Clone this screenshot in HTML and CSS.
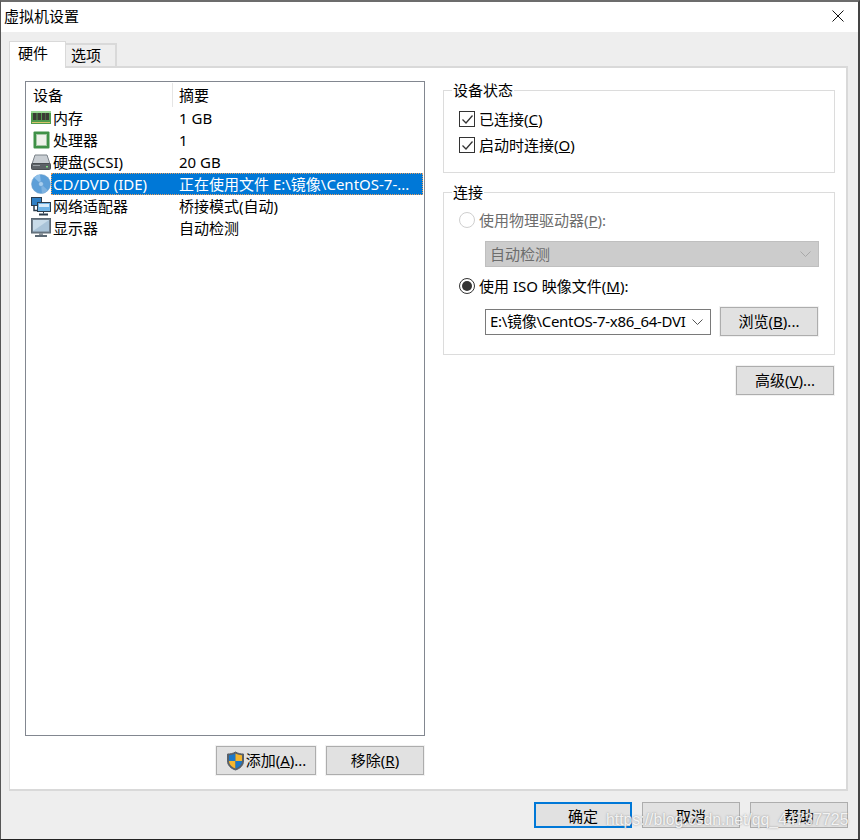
FILE: index.html
```html
<!DOCTYPE html>
<html lang="zh-CN">
<head>
  <meta charset="UTF-8">
  <title>虚拟机设置</title>
  <link rel="stylesheet" href="styles.css">
</head>
<body>
  <div class="window">
    <div class="title-bar">
      <span class="title">虚拟机设置</span>
      <svg class="close" width="12" height="12" viewBox="0 0 12 12"><path d="M0.5 0.5L11.5 11.5M11.5 0.5L0.5 11.5" stroke="#111" stroke-width="1" fill="none"/></svg>
    </div>

    <div class="client">
      <div class="tabs">
        <div class="tab active">硬件</div>
        <div class="tab">选项</div>
      </div>

      <div class="panel">
        <div class="left">
          <div class="list">
            <div class="list-head">
              <span class="head-name">设备</span>
              <span class="head-summary">摘要</span>
            </div>

            <div class="row">
              <svg class="icon" width="20" height="20" viewBox="0 0 20 20"><rect x="0" y="3" width="20" height="13" fill="#4f9a4c"/><rect x="0" y="3" width="20" height="2" fill="#9ad695"/><rect x="2" y="5" width="3.500" height="7" fill="#3b3b35"/><rect x="6.500" y="5" width="3.500" height="7" fill="#3b3b35"/><rect x="11" y="5" width="3.500" height="7" fill="#3b3b35"/><rect x="15" y="5" width="3" height="7" fill="#3b3b35"/><rect x="1" y="14" width="18" height="1" fill="#d7c46a"/></svg>
              <div class="row-body"><span class="name">内存</span><span class="summary">1 GB</span></div>
            </div>
            <div class="row">
              <svg class="icon" width="20" height="20" viewBox="0 0 20 20"><rect x="2.500" y="1.500" width="16" height="17" rx="1" fill="#3f9147"/><rect x="5.500" y="4.500" width="10" height="11" fill="#eef2ea" stroke="#a5c8a5" stroke-width="1"/></svg>
              <div class="row-body"><span class="name">处理器</span><span class="summary">1</span></div>
            </div>
            <div class="row">
              <svg class="icon" width="20" height="20" viewBox="0 0 20 20"><path d="M4 3h12l3 9H1z" fill="#c9ced3" stroke="#7b8289"/><rect x="0.500" y="11.500" width="19" height="6" rx="1" fill="#5d6267" stroke="#4a4e52"/><rect x="2" y="13" width="7" height="1" fill="#9aa0a5"/><rect x="15" y="14" width="2" height="1.500" fill="#7fe07f"/></svg>
              <div class="row-body"><span class="name">硬盘(SCSI)</span><span class="summary">20 GB</span></div>
            </div>
            <div class="row selected">
              <svg class="icon" width="20" height="20" viewBox="0 0 20 20"><circle cx="10" cy="10" r="9.500" fill="#5d9fd8" stroke="#6d9fc9" stroke-width="0.500"/><path d="M10 10L3 3.500A9.500 9.500 0 0 1 9 0.500z" fill="#8fc0ea"/><path d="M10 10L17 16.500A9.500 9.500 0 0 1 11 19.500z" fill="#80b3e0"/><circle cx="10" cy="10" r="2.500" fill="#a9cfef" stroke="#4f8cc4" stroke-width="0.500"/></svg>
              <div class="row-body"><span class="name">CD/DVD (IDE)</span><span class="summary">正在使用文件 E:\镜像\CentOS-7-...</span></div>
            </div>
            <div class="row">
              <svg class="icon" width="20" height="20" viewBox="0 0 20 20"><rect x="0.500" y="1.500" width="10" height="8" fill="#2f7fc4" stroke="#2b3c4c"/><path d="M3 9.500v5h4" stroke="#2b3c4c" fill="none" stroke-width="1.500"/><rect x="6.500" y="6.500" width="13" height="9" fill="#6fb4e6" stroke="#2b3c4c"/><rect x="8" y="8" width="10" height="3" fill="#d8ecfa"/><path d="M8 18.500h9" stroke="#2b3c4c" stroke-width="2"/><path d="M12.500 15.500v2" stroke="#2b3c4c"/></svg>
              <div class="row-body"><span class="name">网络适配器</span><span class="summary">桥接模式(自动)</span></div>
            </div>
            <div class="row">
              <svg class="icon" width="20" height="20" viewBox="0 0 20 20"><rect x="0.500" y="0.500" width="19" height="14.500" fill="#6f7d8a" stroke="#5b6873"/><rect x="2" y="2" width="16" height="11.500" fill="#a9c3d8"/><path d="M2 2h16L2 13z" fill="#c8dbe9"/><rect x="8" y="15" width="4" height="2" fill="#8a949c"/><rect x="4" y="17" width="12" height="2" fill="#5b6873"/></svg>
              <div class="row-body"><span class="name">显示器</span><span class="summary">自动检测</span></div>
            </div>
          </div>

          <div class="list-buttons">
            <button class="btn btn-add">
              <svg width="19" height="20" viewBox="0 0 19 20"><path d="M9.500 1C7 2.500 4.500 3 1.500 3v7c0 4.500 3.500 7.500 8 9 4.500-1.500 8-4.500 8-9V3c-3 0-5.500-.5-8-2z" fill="#596068" stroke="#596068" stroke-width="1"/><path d="M9.500 2.500C7.500 3.500 5 4 3 4.200V10h6.500z" fill="#1c78c8"/><path d="M9.500 2.500C11.500 3.500 14 4 16 4.200V10H9.500z" fill="#f5b62c"/><path d="M3 10h6.500v7.500C6 16.200 3 14 3 10z" fill="#f5b62c"/><path d="M16 10H9.500v7.500C13 16.200 16 14 16 10z" fill="#1c78c8"/></svg>
              <span>添加(<u>A</u>)...</span>
            </button>
            <button class="btn btn-remove">移除(<u>R</u>)</button>
          </div>
        </div>

        <div class="right">
          <fieldset class="group group-status">
            <legend>设备状态</legend>
            <label class="option first">
              <span class="check"><svg width="11" height="9" viewBox="0 0 11 9"><path d="M0.500 4.500L4 8L10.500 0.500" stroke="#333" stroke-width="1.300" fill="none"/></svg></span>
              <span class="option-text">已连接(<u>C</u>)</span>
            </label>
            <label class="option">
              <span class="check"><svg width="11" height="9" viewBox="0 0 11 9"><path d="M0.500 4.500L4 8L10.500 0.500" stroke="#333" stroke-width="1.300" fill="none"/></svg></span>
              <span class="option-text">启动时连接(<u>O</u>)</span>
            </label>
          </fieldset>

          <fieldset class="group group-connect">
            <legend>连接</legend>
            <label class="option first disabled">
              <span class="radio"></span>
              <span class="option-text">使用物理驱动器(<u>P</u>):</span>
            </label>
            <div class="combo combo-disabled">
              <span class="combo-text">自动检测</span>
              <svg width="11" height="6" viewBox="0 0 11 6"><path d="M0.500 0.500L5.500 5.500L10.500 0.500" stroke="#a8a8a8" fill="none"/></svg>
            </div>
            <label class="option option-iso">
              <span class="radio on"></span>
              <span class="option-text">使用 ISO 映像文件(<u>M</u>):</span>
            </label>
            <div class="iso-row">
              <div class="combo combo-iso">
                <span class="combo-text">E:\镜像\CentOS-7-x86_64-DVI</span>
                <svg width="11" height="6" viewBox="0 0 11 6"><path d="M0.500 0.500L5.500 5.500L10.500 0.500" stroke="#555" fill="none"/></svg>
              </div>
              <button class="btn btn-browse">浏览(<u>B</u>)...</button>
            </div>
          </fieldset>

          <div class="advanced-row">
            <button class="btn">高级(<u>V</u>)...</button>
          </div>
        </div>
      </div>

      <div class="footer">
        <button class="btn btn-default">确定</button>
        <button class="btn">取消</button>
        <button class="btn">帮助</button>
      </div>
    </div>

    <div class="watermark">https://blog.csdn.net/qq_44737725</div>
  </div>
</body>
</html>
```

FILE: styles.css
```css
* {
  box-sizing: border-box;
}
html, body {
  margin: 0;
  padding: 0;
  background: #fff;
}
body {
  font-family: "Noto Sans", "Noto Sans CJK SC", sans-serif;
  font-size: 15px;
  color: #000;
}
.window {
  position: relative;
  width: 860px;
  height: 840px;
  display: flex;
  flex-direction: column;
  border-top: 2px solid #6c6c6c;
  border-left: 1px solid #555;
  border-right: 2px solid #444;
  border-bottom: 1px solid #222;
  overflow: hidden;
}
.title-bar {
  height: 30px;
  flex: none;
  background: #fff;
  display: flex;
  align-items: center;
  justify-content: space-between;
  padding: 0 14px 2px 3px;
}
.title {
  margin-top: -1px;
}
.client {
  flex: 1;
  display: flex;
  flex-direction: column;
  background: #eee;
  padding: 9px 10px 0 8px;
  min-height: 0;
}

/* tabs */
.tabs {
  display: flex;
  align-items: flex-end;
  height: 25px;
  flex: none;
}
.tab {
  width: 51px;
  height: 23px;
  line-height: 20px;
  padding-left: 5px;
  background: #eee;
  border: 2px solid #d9d9d9;
  border-left: none;
  border-bottom: none;
}
.tab.active {
  width: 57px;
  height: 27px;
  line-height: 22px;
  padding-left: 8px;
  background: #fff;
  border: 1px solid #d9d9d9;
  border-bottom: none;
  margin-bottom: -2px;
  position: relative;
  z-index: 1;
}
.panel {
  flex: 1;
  display: flex;
  background: #fff;
  border: 1px solid #d9d9d9;
  border-width: 2px 2px 2px 1px;
  padding: 13px 11px 14px 15px;
  min-height: 0;
}

/* device list */
.left {
  width: 400px;
  flex: none;
  display: flex;
  flex-direction: column;
}
.list {
  flex: 1;
  border: 1px solid #828790;
  background: #fff;
  padding: 0 1px;
}
.list-head {
  height: 25px;
  display: flex;
  align-items: center;
}
.head-name {
  width: 146px;
  padding-left: 6px;
  height: 24px;
  line-height: 25px;
  border-right: 1px solid #e5e5e5;
}
.head-summary {
  padding-left: 6px;
  line-height: 25px;
  height: 24px;
}
.row {
  display: flex;
  align-items: center;
  height: 22px;
}
.icon {
  flex: none;
  margin-left: 4px;
}
.row-body {
  flex: 1;
  display: flex;
  height: 22px;
  line-height: 22px;
  padding-left: 2px;
}
.name {
  width: 126px;
  flex: none;
}
.selected .row-body {
  background: #0078d7;
  color: #fff;
  outline: 1px dotted #e8a060;
  outline-offset: -1px;
}
.list-buttons {
  display: flex;
  justify-content: flex-end;
  gap: 10px;
  margin-top: 10px;
  padding-right: 1px;
}

/* buttons */
.btn {
  width: 98px;
  height: 29px;
  padding: 0 0 2px;
  font: inherit;
  color: #000;
  background: #e1e1e1;
  border: 1px solid #adadad;
  box-shadow: 0 0 0 1px #f2f2f2;
}
.btn-add {
  width: 100px;
  display: flex;
  align-items: center;
  justify-content: center;
  gap: 1px;
}
.btn-add svg {
  margin-top: 2px;
}
.btn-default {
  border: 2px solid #0078d7;
}

/* right side */
.right {
  flex: 1;
  margin-left: 18px;
  display: flex;
  flex-direction: column;
}
.group {
  margin: 0;
  border: 1px solid #dcdcdc;
  padding: 0 8px 0 15px;
}
.group legend {
  margin-left: -7px;
  padding: 0 1px;
  line-height: 18px;
}
.group-status {
  height: 92px;
}
.group-connect {
  height: 172px;
  margin-top: 10px;
}
.option {
  display: flex;
  align-items: center;
  height: 20px;
  gap: 4px;
  margin-top: 6px;
}
.option.first {
  margin-top: 10px;
}
.option-text {
  margin-top: -2px;
}
.group-connect .option.first {
  margin-top: 9px;
}
.option.disabled {
  color: #6d6d6d;
}
.group-connect .option-iso {
  margin-top: 9px;
}
.check {
  width: 16px;
  height: 16px;
  flex: none;
  border: 1px solid #333;
  background: #fff;
  display: flex;
  align-items: center;
  justify-content: center;
}
.radio {
  width: 16px;
  height: 16px;
  flex: none;
  border: 1px solid #333;
  border-radius: 50%;
  background: #fff;
  position: relative;
}
.disabled .radio {
  border-color: #cfcfcf;
}
.radio.on::after {
  content: "";
  position: absolute;
  left: 2px;
  top: 2px;
  width: 10px;
  height: 10px;
  border-radius: 50%;
  background: #333;
}
.combo {
  display: flex;
  align-items: center;
  justify-content: space-between;
  height: 26px;
  border: 1px solid #7a7a7a;
  background: #fff;
  padding: 0 7px 2px 4px;
}
.combo svg {
  margin-top: 2px;
}
.combo-text {
  white-space: nowrap;
}
.combo-iso .combo-text {
  letter-spacing: -0.300px;
}
.combo-disabled {
  margin: 11px 7px 0 26px;
  width: 334px;
  background: #ccc;
  border-color: #bfbfbf;
  color: #6d6d6d;
}
.iso-row {
  display: flex;
  align-items: center;
  gap: 9px;
  margin: 11px 0 0 26px;
}
.combo-iso {
  width: 226px;
}
.advanced-row {
  display: flex;
  justify-content: flex-end;
  margin-top: 11px;
  padding-right: 1px;
}

/* bottom bar */
.footer {
  flex: none;
  height: 48px;
  display: flex;
  justify-content: flex-end;
  gap: 10px;
  padding-top: 11px;
}
.footer .btn {
  height: 26px;
  padding: 0;
  box-shadow: none;
}
.watermark {
  position: absolute;
  left: 605px;
  top: 809px;
  font-family: "Liberation Sans", sans-serif;
  font-size: 15.800px;
  color: rgba(255, 255, 255, 0.85);
  text-shadow: 0 0 2px rgba(110, 110, 110, 0.7);
  white-space: nowrap;
}
```
